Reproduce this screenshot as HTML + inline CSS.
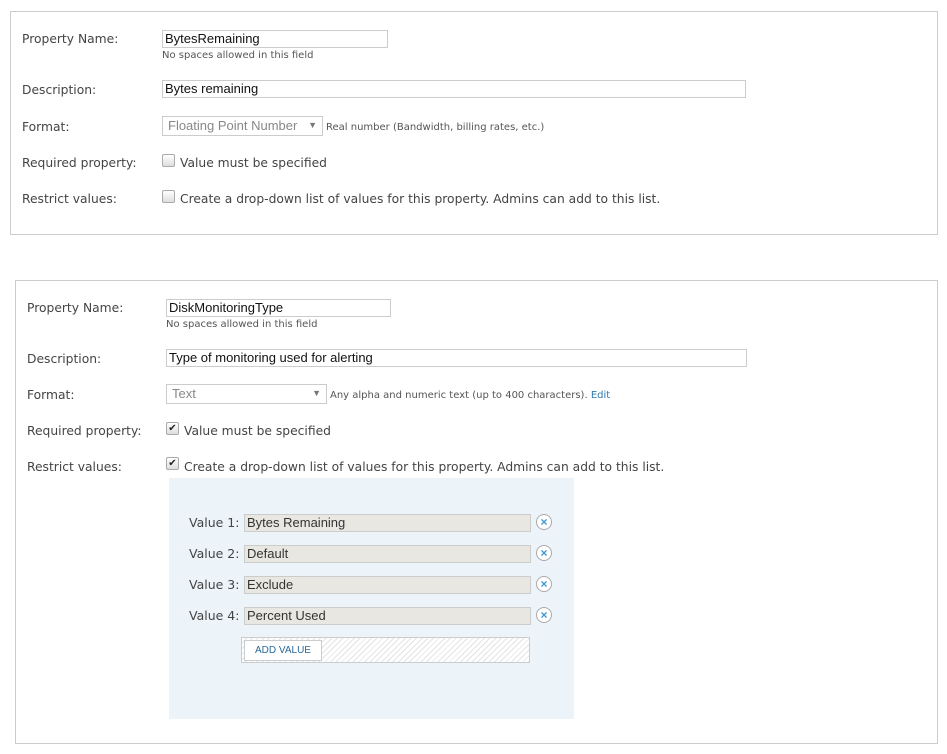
<!DOCTYPE html>
<html><head><style>
body{margin:0;width:947px;height:754px;background:#fff;font-family:"Liberation Sans",sans-serif;color:#444;position:relative;overflow:hidden}
.a{position:absolute}
.box{position:absolute;border:1px solid #ccc}
.lbl{position:absolute;font-family:"DejaVu Sans",sans-serif;font-size:12.3px;color:#444;line-height:16px}
.inp{position:absolute;border:1px solid #ccc;font-size:13px;line-height:16px;color:#111;padding-left:2px;box-sizing:border-box;height:18px}
.hint{position:absolute;font-family:"DejaVu Sans",sans-serif;font-size:10px;color:#555}
.sel{position:absolute;border:1px solid #ccc;box-sizing:border-box;font-size:13px;color:#888;padding-left:5px;line-height:17px}
.sel:after{content:"▼";position:absolute;right:5px;top:0;font-size:9px;color:#777}
.cb{position:absolute;width:11px;height:11px;border:1px solid #aaa;border-radius:2px;background:linear-gradient(#fff,#ddd);font-size:10px;line-height:11px;text-align:center;color:#222}
.vl{position:absolute;font-family:"DejaVu Sans",sans-serif;font-size:12.5px;color:#444;left:189px}
.vi{position:absolute;left:244px;width:287px;height:18px;box-sizing:border-box;background:#e9e7e1;border:1px solid #ccc;font-size:13px;color:#333;padding-left:2px;line-height:16px}
.x{position:absolute;left:536px;width:16px;height:16px;border:1px solid #aaa;border-radius:50%;box-sizing:border-box;color:#3a9ad0;font-size:12px;font-weight:bold;text-align:center;line-height:14px;background:#fff}
</style></head><body>
<div class="box" style="left:10px;top:11px;width:926px;height:222px"></div>
<div class="lbl" style="left:22px;top:31px">Property Name:</div>
<div class="inp" style="left:162px;top:30px;width:226px">BytesRemaining</div>
<div class="hint" style="left:162px;top:50px">No spaces allowed in this field</div>
<div class="lbl" style="left:22px;top:82px">Description:</div>
<div class="inp" style="left:162px;top:80px;width:584px">Bytes remaining</div>
<div class="lbl" style="left:22px;top:119px">Format:</div>
<div class="sel" style="left:162px;top:116px;width:161px;height:20px">Floating Point Number</div>
<div class="hint" style="left:326px;top:122px">Real number (Bandwidth, billing rates, etc.)</div>
<div class="lbl" style="left:22px;top:155px">Required property:</div>
<div class="cb" style="left:162px;top:154px"></div>
<div class="lbl" style="left:180px;top:155px">Value must be specified</div>
<div class="lbl" style="left:22px;top:191px">Restrict values:</div>
<div class="cb" style="left:162px;top:190px"></div>
<div class="lbl" style="left:180px;top:191px">Create a drop-down list of values for this property. Admins can add to this list.</div>

<div class="box" style="left:15px;top:280px;width:921px;height:462px"></div>
<div class="lbl" style="left:27px;top:300px">Property Name:</div>
<div class="inp" style="left:166px;top:299px;width:225px">DiskMonitoringType</div>
<div class="hint" style="left:166px;top:319px">No spaces allowed in this field</div>
<div class="lbl" style="left:27px;top:351px">Description:</div>
<div class="inp" style="left:166px;top:349px;width:581px">Type of monitoring used for alerting</div>
<div class="lbl" style="left:27px;top:387px">Format:</div>
<div class="sel" style="left:166px;top:384px;width:161px;height:20px">Text</div>
<div class="hint" style="left:330px;top:390px">Any alpha and numeric text (up to 400 characters). <span style="color:#2a7ab0">Edit</span></div>
<div class="lbl" style="left:27px;top:423px">Required property:</div>
<div class="cb" style="left:166px;top:422px">✔</div>
<div class="lbl" style="left:184px;top:423px">Value must be specified</div>
<div class="lbl" style="left:27px;top:459px">Restrict values:</div>
<div class="cb" style="left:166px;top:457px">✔</div>
<div class="lbl" style="left:184px;top:459px">Create a drop-down list of values for this property. Admins can add to this list.</div>

<div class="a" style="left:169px;top:478px;width:405px;height:241px;background:#ecf4fa"></div>
<div class="vl" style="top:515px">Value 1:</div><div class="vi" style="top:514px">Bytes Remaining</div><div class="x" style="top:514px">×</div>
<div class="vl" style="top:546px">Value 2:</div><div class="vi" style="top:545px">Default</div><div class="x" style="top:545px">×</div>
<div class="vl" style="top:577px">Value 3:</div><div class="vi" style="top:576px">Exclude</div><div class="x" style="top:576px">×</div>
<div class="vl" style="top:608px">Value 4:</div><div class="vi" style="top:607px">Percent Used</div><div class="x" style="top:607px">×</div>
<div class="a" style="left:241px;top:637px;width:289px;height:26px;box-sizing:border-box;border:1px solid #ccc;background:repeating-linear-gradient(135deg,#fff 0 3px,#e4e4e4 3px 4px)"></div>
<div class="a" style="left:244px;top:640px;width:78px;height:21px;box-sizing:border-box;border:1px solid #ccc;background:#fff;font-size:10px;color:#2a6a9a;text-align:center;line-height:20px">ADD VALUE</div>
</body></html>
